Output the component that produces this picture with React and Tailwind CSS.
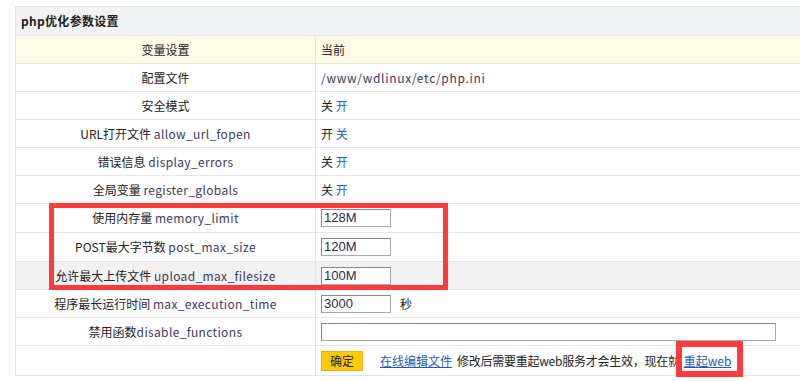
import React from 'react'

const cn = '"Noto Sans CJK SC", "Noto Sans", sans-serif'

function En({ children, t = 'tracking-[0.35px]' }) {
  return <span className={`text-[#3b3b5e] ${t}`}>{children}</span>
}

function Row({ label, children, h = 'h-[28px]', bg = '' }) {
  return (
    <div className={`flex ${h} ${bg} border-b border-[#e6e6e6]`}>
      <div className="w-[300px] shrink-0 flex items-center justify-center border-r border-[#e6e6e6] text-[#222]">
        {label}
      </div>
      <div className="flex items-center pl-[5px] text-[#222]">{children}</div>
    </div>
  )
}

function Toggle({ on, off }) {
  return (
    <span>
      {on} <a className="text-[#1f5bb5]">{off}</a>
    </span>
  )
}

function Box({ value, w = 'w-[70px]' }) {
  return (
    <input
      readOnly
      value={value}
      className={`${w} h-[18px] border border-[#aaa] border-t-[#888] border-l-[#888] bg-white px-[2px] text-[13px] text-[#2a2a50] outline-none`}
      style={{ fontFamily: '"Liberation Sans", Arial, sans-serif' }}
    />
  )
}

export default function App() {
  return (
    <div className="relative w-[800px] h-[381px] overflow-hidden bg-white pl-[15px] pt-[6px] text-[12px]" style={{ fontFamily: cn }}>
      <div className="w-[800px] border-t border-l border-[#e6e6e6]">
        <div className="h-[29px] bg-[#f2f3f5] border-b border-[#e6e6e6] flex items-center pl-[5px] font-bold text-[#222] tracking-[0.3px]">
          php优化参数设置
        </div>
        <Row label="变量设置" bg="bg-[#fffde8]">当前</Row>
        <Row label="配置文件"><En t="tracking-[0.7px]">/www/wdlinux/etc/php.ini</En></Row>
        <Row label="安全模式"><Toggle on="关" off="开" /></Row>
        <Row label={<span>URL打开文件 <En>allow_url_fopen</En></span>}><Toggle on="开" off="关" /></Row>
        <Row label={<span>错误信息 <En>display_errors</En></span>}><Toggle on="关" off="开" /></Row>
        <Row label={<span>全局变量 <En>register_globals</En></span>}><Toggle on="关" off="开" /></Row>
        <Row h="h-[29px]" label={<span>使用内存量 <En>memory_limit</En></span>}><Box value="128M" /></Row>
        <Row h="h-[29px]" label={<span>POST最大字节数 <En>post_max_size</En></span>}><Box value="120M" /></Row>
        <Row bg="bg-[#f2f2f2]" label={<span>允许最大上传文件 <En>upload_max_filesize</En></span>}><Box value="100M" /></Row>
        <Row label={<span>程序最长运行时间 <En>max_execution_time</En></span>}>
          <Box value="3000" />
          <span className="ml-[9px]">秒</span>
        </Row>
        <Row label={<span>禁用函数<En>disable_functions</En></span>}><Box value="" w="w-[455px]" /></Row>
        <Row h="h-[30px]" label="">
          <button className="w-[42px] h-[20px] bg-[#ffcc00] border border-[#f5a623] text-[12px] text-[#222]">确定</button>
          <a className="ml-[17px] text-[#1f5bb5] underline">在线编辑文件</a>
          <span className="ml-[5px] tracking-[-0.25px]">修改后需要重起web服务才会生效，现在就</span>
          <a className="ml-[4px] text-[#1f5bb5] underline">重起web</a>
        </Row>
      </div>

      <div className="absolute left-[49px] top-[203px] w-[399px] h-[87px] border-[5px] border-[#ff3b3b]" />
      <div className="absolute left-[676px] top-[341px] w-[67px] h-[36px] border-[6px] border-[#ff3b3b]" />
    </div>
  )
}
